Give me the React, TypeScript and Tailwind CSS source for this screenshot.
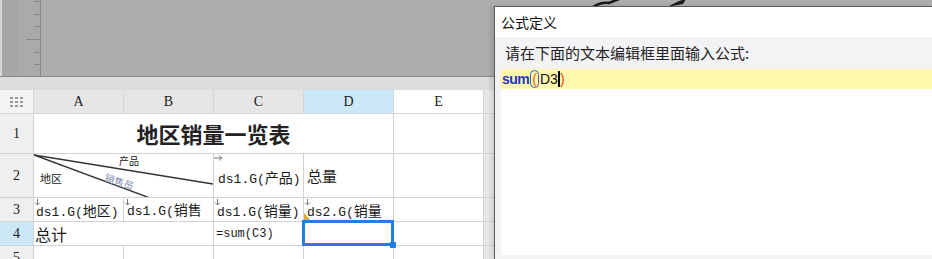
import React from "react";

const Mix = ({ t }: { t: string }) => {
  const runs = t.match(/[\x00-\x7f]+|[^\x00-\x7f]+/g) || [];
  return (
    <>
      {runs.map((r, i) =>
        /^[\x00-\x7f]+$/.test(r) ? (
          <span key={i} className="font-['Liberation_Mono',monospace] text-[13px]">
            {r}
          </span>
        ) : (
          <span key={i} className="font-['Noto_Sans_CJK_SC',sans-serif] text-[14px]">
            {r}
          </span>
        )
      )}
    </>
  );
};

const DownArrow = () => (
  <svg className="absolute left-[0px] top-[1px]" width="7" height="7" viewBox="0 0 7 7">
    <path d="M3.5 0 V6 M1 3.5 L3.5 6 L6 3.5" stroke="#7a7a7a" strokeWidth="1" fill="none" />
  </svg>
);

const RightArrow = () => (
  <svg className="absolute left-[0px] top-[1px]" width="9" height="6" viewBox="0 0 9 6">
    <path d="M0 3 H8 M5 0.5 L8 3 L5 5.5" stroke="#7a7a7a" strokeWidth="1" fill="none" />
  </svg>
);

const cell = "border-r border-b border-[#d2d2d2] bg-white relative overflow-hidden";
const colHead =
  "border-r border-b border-[#d6d6d6] bg-[#e6e6e6] flex items-center justify-center font-['Liberation_Serif',serif] text-[14px] text-[#222]";
const rowHead =
  "border-r border-b border-[#d2d2d2] bg-[#efefef] flex items-center justify-center font-['Liberation_Serif',serif] text-[14px] text-[#222]";

export default function App() {
  return (
    <div className="w-[932px] h-[259px] relative overflow-hidden bg-[#ebebeb] font-['Noto_Sans_CJK_SC',sans-serif] text-[#1a1a1a]">
      {/* top gray canvas */}
      <div className="h-[77px] flex border-b border-[#8c8c8c] bg-[#adadad]">
        <div className="w-[2px] bg-[#d6d6d6]" />
        <div className="w-[16px] bg-[#a6a6a6]" />
        <div className="w-[23px] bg-[#aaaaaa] border-r border-[#8a8a8a] relative">
          <div className="absolute right-0 top-[1px] w-[6px] h-px bg-[#8a8a8a]" />
          <div className="absolute right-0 top-[14px] w-[6px] h-px bg-[#8a8a8a]" />
          <div className="absolute right-0 top-[26px] w-[6px] h-px bg-[#8a8a8a]" />
          <div className="absolute right-0 top-[39px] w-[14px] h-px bg-[#8a8a8a]" />
          <div className="absolute right-0 top-[52px] w-[6px] h-px bg-[#8a8a8a]" />
          <div className="absolute right-0 top-[64px] w-[6px] h-px bg-[#8a8a8a]" />
        </div>
        <div className="flex-1 relative">
          <svg className="absolute left-[0px] top-0" width="700" height="8" viewBox="0 0 700 8">
            <path d="M552 7 Q560 2 568 3 L578 -1" stroke="#1a1a1a" strokeWidth="2.5" fill="none" />
            <path d="M626 7 L634 3 Q640 0 645 -1 L642 4 Z" fill="#1a1a1a" />
          </svg>
        </div>
      </div>
      <div className="h-[13px] bg-[#dcdcdc]" />

      {/* sheet */}
      <div className="grid grid-cols-[34px_90px_90px_90px_90px_90px_1fr] grid-rows-[24px_40px_44px_24px_24px_24px]">
        {/* header row */}
        <div className="border-r border-b border-[#d6d6d6] bg-[#f4f4f4] flex items-center justify-center">
          <svg width="13" height="10" viewBox="0 0 13 10">
            {[0, 1, 2].map((r) =>
              [0, 1, 2].map((c) => (
                <rect key={`${r}${c}`} x={c * 5} y={r * 4} width="3" height="2" fill="#9a9a9a" />
              ))
            )}
          </svg>
        </div>
        <div className={colHead}>A</div>
        <div className={colHead}>B</div>
        <div className={colHead}>C</div>
        <div className={colHead + " !bg-[#cce8f6]"}>D</div>
        <div className={colHead + " !bg-white"}>E</div>
        <div className="border-b border-[#d6d6d6] bg-[#e8e8e8]" />

        {/* row 1 */}
        <div className={rowHead}>1</div>
        <div className={cell + " col-span-4 flex items-center justify-center"}>
          <span className="text-[22px] font-bold tracking-[0px] text-[#222]">地区销量一览表</span>
        </div>
        <div className={cell} />
        <div className="border-b border-[#d2d2d2] bg-[#e8e8e8]" />

        {/* row 2 */}
        <div className={rowHead}>2</div>
        <div className={cell + " col-span-2"}>
          <svg className="absolute inset-0" width="180" height="44" viewBox="0 0 180 44">
            <line x1="0" y1="1" x2="179" y2="30" stroke="#333" strokeWidth="1.4" />
            <line x1="0" y1="1" x2="116" y2="44" stroke="#333" strokeWidth="1.4" />
          </svg>
          <span className="absolute left-[85px] top-[1px] text-[10px] leading-[12px]">产品</span>
          <span className="absolute left-[6px] top-[18px] text-[11px] leading-[13px]">地区</span>
          <span className="absolute left-[71px] top-[17px] text-[10px] leading-[12px] text-[#7f8cb0] rotate-[18deg] origin-left">
            销售员
          </span>
        </div>
        <div className={cell + " flex items-center pl-[4px] pt-[2px]"}>
          <RightArrow />
          <span className="whitespace-nowrap">
            <Mix t="ds1.G(产品)" />
          </span>
        </div>
        <div className={cell + " flex items-center pl-[3px] pt-[2px]"}>
          <span className="text-[15px]">总量</span>
        </div>
        <div className={cell} />
        <div className="border-b border-[#d2d2d2] bg-[#e8e8e8]" />

        {/* row 3 */}
        <div className={rowHead}>3</div>
        <div className={cell + " flex items-center pl-[2px] pt-[1px]"}>
          <DownArrow />
          <span className="whitespace-nowrap">
            <Mix t="ds1.G(地区)" />
          </span>
        </div>
        <div className={cell + " flex flex-col pl-[3px] pt-[2px] leading-[17px]"}>
          <DownArrow />
          <span className="whitespace-nowrap">
            <Mix t="ds1.G(销售" />
          </span>
          <span className="whitespace-nowrap">
            <Mix t="员)" />
          </span>
        </div>
        <div className={cell + " flex items-center pl-[3px] pt-[1px]"}>
          <DownArrow />
          <span className="whitespace-nowrap">
            <Mix t="ds1.G(销量)" />
          </span>
        </div>
        <div className={cell + " flex items-center pl-[3px] pt-[1px]"}>
          <DownArrow />
          <svg className="absolute left-0 bottom-0" width="7" height="8" viewBox="0 0 7 8">
            <path d="M0 0 L0 8 L7 8 Z" fill="#f0a526" />
          </svg>
          <span className="whitespace-nowrap">
            <Mix t="ds2.G(销量" />
          </span>
        </div>
        <div className={cell} />
        <div className="border-b border-[#d2d2d2] bg-[#e8e8e8]" />

        {/* row 4 */}
        <div className={rowHead + " !bg-[#cce8f6]"}>4</div>
        <div className={cell + " col-span-2 flex items-center pl-[1px]"}>
          <span className="text-[16px]">总计</span>
        </div>
        <div className={cell + " flex items-center pl-[2px]"}>
          <span className="font-['Liberation_Mono',monospace] text-[12px]">=sum(C3)</span>
        </div>
        <div className={cell + " !overflow-visible z-10"}>
          <div className="absolute left-[-2px] top-[-2px] right-[-1px] bottom-[-1px] border-[3px] border-[#1f7fe5]" />
          <div className="absolute right-[-3px] bottom-[-3px] w-[6px] h-[6px] bg-[#1f7fe5]" />
        </div>
        <div className={cell} />
        <div className="border-b border-[#d2d2d2] bg-[#e8e8e8]" />

        {/* row 5 */}
        <div className={rowHead + " items-start pt-[1px]"}>5</div>
        <div className={cell} />
        <div className={cell} />
        <div className={cell} />
        <div className={cell} />
        <div className={cell} />
        <div className="border-b border-[#d2d2d2] bg-[#e8e8e8]" />
      </div>

      {/* formula dialog */}
      <div className="absolute left-[494px] top-[6px] right-0 bottom-0 bg-white border-l border-t border-[#5a5a5a] shadow-[-3px_0_5px_rgba(0,0,0,0.12)] flex flex-col z-20">
        <div className="h-[30px] flex items-center pl-[6px] text-[14px] text-[#111]">公式定义</div>
        <div className="flex-1 bg-[#f3f3f5] flex flex-col pl-[6px] pb-[4px]">
          <div className="h-[32px] flex items-center pl-[4px] text-[15px] text-[#222]">
            请在下面的文本编辑框里面输入公式:
          </div>
          <div className="flex-1 bg-white flex flex-col">
            <div className="h-[20px] bg-[#fff7ab] flex items-center pl-[1px] font-['Liberation_Sans',sans-serif] text-[14px]">
              <span className="font-bold text-[#2235c4] tracking-[-0.5px]">sum</span>
              <span className="ml-[1px] px-[1px] h-[18px] flex items-center rounded-full border border-[#3d5fc9] text-[#e0641c]">
                (
              </span>
              <span className="ml-[1px] text-[#111]">D3</span>
              <span className="w-[2px] h-[16px] bg-black" />
              <span className="text-[#e0441c]">)</span>
            </div>
          </div>
        </div>
      </div>
    </div>
  );
}
